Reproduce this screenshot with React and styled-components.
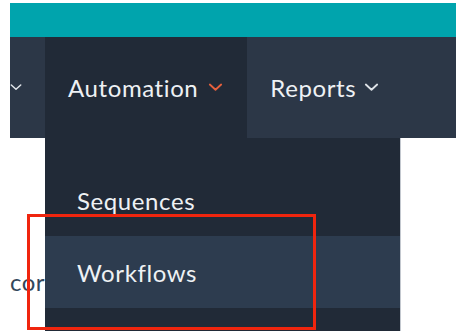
import styled, { createGlobalStyle } from 'styled-components';

const GlobalStyle = createGlobalStyle`
  html, body {
    margin: 0;
    padding: 0;
    background: #ffffff;
  }
  body {
    font-family: Lato, "Open Sans", sans-serif;
  }
`;

const Page = styled.div`
  position: relative;
  width: 464px;
  height: 335px;
  padding: 3px 8px 0 10px;
  box-sizing: border-box;
  overflow: hidden;
`;

const TopBar = styled.div`
  height: 34px;
  background: #00a4ad;
`;

const NavBar = styled.nav`
  display: flex;
  height: 101px;
  background: #2c3747;
`;

const NavItem = styled.div`
  position: relative;
  display: flex;
  align-items: center;
  gap: ${(p) => (p.$active ? '10px' : '8px')};
  padding: 0 24px 0 23px;
  background: ${(p) => (p.$active ? '#212a37' : 'transparent')};
  color: #eef1f4;
  font-size: 24px;
  letter-spacing: 0.6px;
  cursor: pointer;
`;

const Stub = styled.div`
  display: flex;
  align-items: center;
  width: 35px;
  overflow: hidden;
  justify-content: flex-end;
  padding-right: 23px;
  box-sizing: border-box;
`;

const Dropdown = styled.ul`
  position: absolute;
  top: 100%;
  left: 0;
  width: 356px;
  margin: 0;
  padding: 26px 0 23px;
  list-style: none;
  background: #212a37;
  border-right: 1px solid #c3c8cf;
  box-sizing: border-box;
  z-index: 2;
`;

const MenuItem = styled.li`
  display: flex;
  align-items: center;
  height: 72px;
  padding-left: 32px;
  color: #eef1f4;
  font-size: 24px;
  letter-spacing: 0.6px;
  background: ${(p) => (p.$selected ? '#2d3c4f' : 'transparent')};
`;

const Content = styled.div`
  padding-top: 129px;
  color: #33475b;
  font-size: 24px;
  letter-spacing: 0.5px;
`;

const Annotation = styled.div`
  position: absolute;
  left: 27px;
  top: 214px;
  width: 289px;
  height: 116px;
  border: 3px solid #f0250e;
  box-sizing: border-box;
  z-index: 3;
`;

function Chevron({ color, size = 15 }) {
  return (
    <svg width={size} height={size * 0.55} viewBox="0 0 14 8" fill="none">
      <path d="M1.5 1.5 L7 6.5 L12.5 1.5" stroke={color} strokeWidth="1.8" strokeLinecap="round" strokeLinejoin="round" />
    </svg>
  );
}

export default function App() {
  return (
    <>
      <GlobalStyle />
      <Page>
        <TopBar />
        <NavBar>
          <Stub>
            <Chevron color="#dfe3e8" />
          </Stub>
          <NavItem $active>
            Automation
            <Chevron color="#e7603d" />
            <Dropdown>
              <MenuItem>Sequences</MenuItem>
              <MenuItem $selected>Workflows</MenuItem>
            </Dropdown>
          </NavItem>
          <NavItem>
            Reports
            <Chevron color="#dfe3e8" />
          </NavItem>
        </NavBar>
        <Content>cor</Content>
        <Annotation />
      </Page>
    </>
  );
}
